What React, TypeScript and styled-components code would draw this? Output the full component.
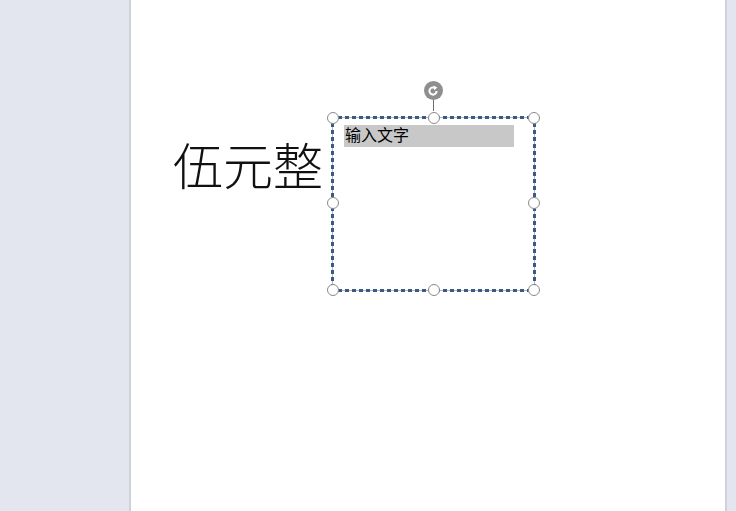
import React from "react";
import styled, { createGlobalStyle } from "styled-components";

const GlobalStyle = createGlobalStyle`
  html, body { margin: 0; padding: 0; }
  body {
    background: #e3e6ee;
    overflow: hidden;
    font-family: "Noto Sans CJK SC", "Noto Sans", sans-serif;
  }
`;

const Workspace = styled.div`
  display: flex;
  width: 736px;
  height: 511px;
  background: #e3e6ee;
`;

const Gutter = styled.div<{ $side: "left" | "right" }>`
  flex: ${(p) => (p.$side === "left" ? "0 0 129px" : "1 1 auto")};
  background: #e3e6ee;
  border-${(p) => (p.$side === "left" ? "right" : "left")}: 2px solid #cfd2d9;
`;

const Page = styled.div`
  flex: 0 0 594px;
  background: #ffffff;
  padding: 116px 0 0 42px;
  box-sizing: border-box;
`;

const Row = styled.div`
  display: flex;
  align-items: flex-start;
`;

const BigText = styled.div`
  width: 158px;
  margin-top: 22px;
  font-family: "Noto Sans CJK TC", "Noto Sans CJK SC", serif;
  font-weight: 300;
  font-size: 50px;
  line-height: 1;
  color: #111;
  white-space: nowrap;
`;

const Frame = styled.div`
  position: relative;
  width: 205px;
  height: 176px;
  box-sizing: border-box;
  padding: 9px 0 0 13px;
  background:
    repeating-linear-gradient(90deg, #3d5b82 0 4px, transparent 4px 7px) left top / 100% 3px no-repeat,
    repeating-linear-gradient(90deg, #3d5b82 0 4px, transparent 4px 7px) left bottom / 100% 3px no-repeat,
    repeating-linear-gradient(180deg, #3d5b82 0 4px, transparent 4px 7px) left top / 3px 100% no-repeat,
    repeating-linear-gradient(180deg, #3d5b82 0 4px, transparent 4px 7px) right top / 3px 100% no-repeat,
    linear-gradient(#a9b7cb, #a9b7cb) left 1px top 0 / 1px 100% no-repeat,
    linear-gradient(#a9b7cb, #a9b7cb) right 1px top 0 / 1px 100% no-repeat,
    linear-gradient(#a9b7cb, #a9b7cb) left 0 top 1px / 100% 1px no-repeat,
    linear-gradient(#a9b7cb, #a9b7cb) left 0 bottom 1px / 100% 1px no-repeat;
`;

const Placeholder = styled.div`
  width: 170px;
  height: 22px;
  background: #c8c8c8;
  font-family: "Noto Sans CJK SC", sans-serif;
  font-size: 16px;
  line-height: 19px;
  color: #000;
  padding-left: 1px;
  box-sizing: border-box;
`;

const Handle = styled.span<{ $x: string; $y: string }>`
  position: absolute;
  left: ${(p) => p.$x};
  top: ${(p) => p.$y};
  width: 12px;
  height: 12px;
  margin: -6px 0 0 -6px;
  box-sizing: border-box;
  border-radius: 50%;
  background: #fff;
  border: 1px solid #8a8a8a;
`;

const Stem = styled.span`
  position: absolute;
  left: 50%;
  top: -17px;
  width: 1px;
  height: 12px;
  margin-left: -1px;
  background: #6e6e6e;
`;

const Rotator = styled.span`
  position: absolute;
  left: 50%;
  top: -35px;
  width: 19px;
  height: 19px;
  margin-left: -10px;
  border-radius: 50%;
  background: #8e8e8e;
  display: flex;
  align-items: center;
  justify-content: center;
`;

const positions: [string, string][] = [
  ["1.5px", "1.5px"],
  ["50%", "1.5px"],
  ["calc(100% - 2px)", "1.5px"],
  ["1.5px", "87px"],
  ["calc(100% - 2px)", "87px"],
  ["1.5px", "calc(100% - 2.5px)"],
  ["50%", "calc(100% - 2.5px)"],
  ["calc(100% - 2px)", "calc(100% - 2.5px)"],
];

export default function App() {
  return (
    <>
      <GlobalStyle />
      <Workspace>
        <Gutter $side="left" />
        <Page>
          <Row>
            <BigText>伍元整</BigText>
            <Frame>
              <Placeholder>输入文字</Placeholder>
              <Stem />
              <Rotator>
                <svg width="12" height="12" viewBox="0 0 12 12">
                  <path
                    d="M9.6 6 A3.6 3.6 0 1 1 7.8 2.9"
                    fill="none"
                    stroke="#fff"
                    strokeWidth="2"
                  />
                  <path d="M6.4 0.6 L10.4 2.4 L7.2 5.2 Z" fill="#fff" />
                </svg>
              </Rotator>
              {positions.map(([x, y], i) => (
                <Handle key={i} $x={x} $y={y} />
              ))}
            </Frame>
          </Row>
        </Page>
        <Gutter $side="right" />
      </Workspace>
    </>
  );
}
